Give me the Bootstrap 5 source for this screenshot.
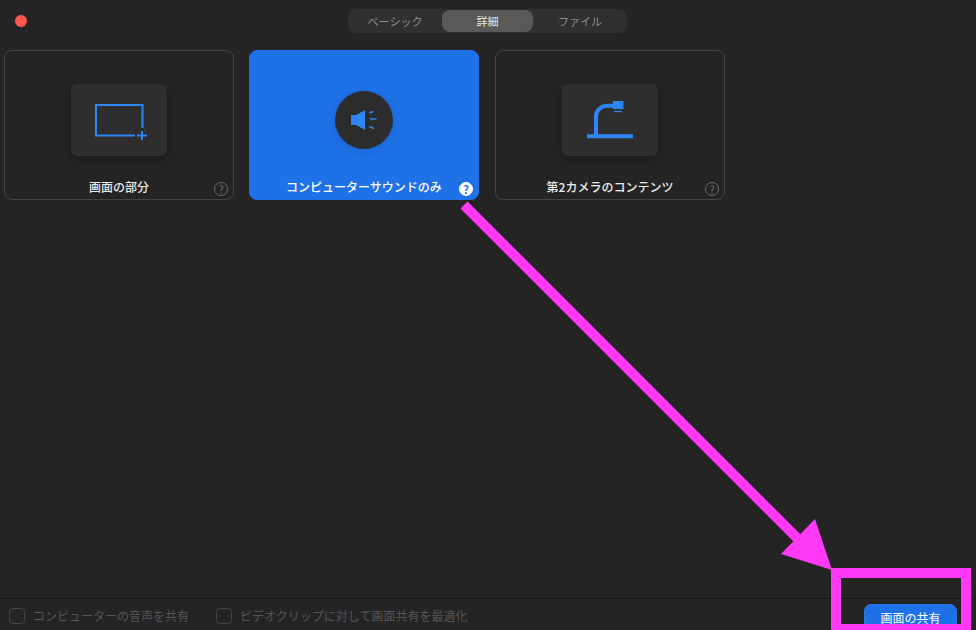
<!DOCTYPE html>
<html lang="ja">
<head>
    <meta charset="UTF-8">
    <meta name="viewport" content="width=device-width, initial-scale=1.0">
    <title>画面の共有</title>
    <link href="https://cdn.jsdelivr.net/npm/bootstrap@5.3.0/dist/css/bootstrap.min.css" rel="stylesheet">
    <style>
        html, body {
            height: 100%;
        }
        body {
            background: #242424;
            font-family: "Noto Sans CJK JP", "Liberation Sans", sans-serif;
            overflow: hidden;
        }
        .share-window {
            height: 630px;
        }
        .title-row {
            height: 50px;
            padding-top: 9px;
        }
        .close-dot {
            width: 12px;
            height: 12px;
            border-radius: 50%;
            background: #ff5750;
            left: 15px;
            top: 15px;
        }
        .mode-tabs {
            width: 279px;
            height: 24px;
            margin-right: 1px;
            background: #303030;
            border-radius: 8px;
            padding: 1px 0;
        }
        .mode-tabs .nav-link {
            height: 22px;
            padding: 0;
            font-size: 11px;
            line-height: 22px;
            color: #8e8e8e;
            border-radius: 8px;
            text-align: center;
        }
        .mode-tabs .tab-basic {
            width: 94px;
        }
        .mode-tabs .nav-link.active {
            width: 91px;
            background: #595959;
            color: #e8e8e8;
        }
        .mode-tabs .tab-file {
            width: 94px;
        }
        .share-cards {
            padding-left: 4px;
            gap: 15px;
        }
        .share-card {
            width: 230px;
            height: 150px;
            padding-top: 33px;
            background: transparent;
            border: 1px solid #444;
            border-radius: 8px;
            color: #ececec;
        }
        .share-card.selected {
            background: #1f71e8;
            border-color: #1f71e8;
            color: #fff;
        }
        .card-last {
            margin-left: 1px;
        }
        .icon-tile {
            width: 96px;
            height: 72px;
            background: #2e2e2e;
            border-radius: 6px;
            box-shadow: 0 3px 10px rgba(0, 0, 0, .28);
        }
        .icon-circle {
            width: 58px;
            height: 58px;
            margin: 7px 0;
            background: #2c2c2c;
            border-radius: 50%;
            box-shadow: 0 2px 10px rgba(0, 0, 0, .12);
        }
        .card-label {
            margin-top: 21px;
            font-size: 12px;
            line-height: 20px;
            font-weight: 500;
        }
        .help-mark {
            right: 5px;
            bottom: 3px;
            width: 14px;
            height: 14px;
            border: 1px solid #6a6a6a;
            border-radius: 50%;
            color: #6a6a6a;
            font-size: 11px;
            line-height: 12px;
            text-align: center;
        }
        .selected .help-mark {
            background: #fff;
            border-color: #fff;
            color: #1f71e8;
            font-weight: 700;
        }
        .bottom-bar {
            height: 32px;
            padding: 5px 19px 0 9px;
            border-top: 1px solid #171717;
            overflow: hidden;
        }
        .fake-check {
            width: 16px;
            height: 16px;
            margin: 4px 8px 0 0;
            background: transparent;
            border: 1px solid #444;
            border-radius: 4px;
        }
        .check-text {
            margin-top: 2px;
            font-size: 12px;
            line-height: 20px;
            color: #565656;
        }
        .check-item + .check-item {
            margin-left: 27px;
        }
        .share-btn {
            width: 93px;
            height: 26px;
            padding: 1px 0 0;
            background: #1f71e8;
            border: 1px solid #2a77e0;
            border-radius: 7px;
            color: #fff;
            font-size: 12px;
            line-height: 20px;
        }
        .arrow-overlay {
            top: 0;
            left: 0;
            pointer-events: none;
        }
    </style>
</head>
<body>
    <div class="share-window d-flex flex-column position-relative">
        <div class="title-row d-flex justify-content-center position-relative">
            <span class="close-dot position-absolute"></span>
            <ul class="nav mode-tabs">
                <li class="nav-item"><a class="nav-link tab-basic" href="#">ベーシック</a></li>
                <li class="nav-item"><a class="nav-link active" href="#">詳細</a></li>
                <li class="nav-item"><a class="nav-link tab-file" href="#">ファイル</a></li>
            </ul>
        </div>

        <div class="share-cards d-flex flex-grow-1 align-items-start">
            <div class="share-card d-flex flex-column align-items-center position-relative">
                <div class="icon-tile">
                    <svg width="96" height="72" viewBox="0 0 96 72" fill="none" stroke="#2d86f8">
                        <path d="M64 51.5H25V21H71.5V44" stroke-width="2"/>
                        <path d="M66 51.5H76M71 47V56" stroke-width="2"/>
                    </svg>
                </div>
                <div class="card-label">画面の部分</div>
                <span class="help-mark position-absolute">?</span>
            </div>

            <div class="share-card selected d-flex flex-column align-items-center position-relative">
                <div class="icon-circle">
                    <svg width="58" height="58" viewBox="0 0 58 58">
                        <path d="M16 24H21L30 19V39L21 34H16Z" fill="#2d86f8"/>
                        <path d="M34.5 22L38.5 20.5M35 28H41.5M34.5 35.5L39 37.5" stroke="#2d86f8" stroke-width="1.6" fill="none"/>
                    </svg>
                </div>
                <div class="card-label">コンピューターサウンドのみ</div>
                <span class="help-mark position-absolute">?</span>
            </div>

            <div class="share-card card-last d-flex flex-column align-items-center position-relative">
                <div class="icon-tile">
                    <svg width="96" height="72" viewBox="0 0 96 72" fill="none" stroke="#2d86f8">
                        <path d="M25 52.3H71" stroke-width="4"/>
                        <path d="M34 52V33C34 26 39 21.8 46 21.8H52" stroke-width="4"/>
                        <rect x="51" y="17" width="10.5" height="8" fill="#2d86f8" stroke="none"/>
                        <path d="M52 27.5H60" stroke-width="1.4"/>
                    </svg>
                </div>
                <div class="card-label">第2カメラのコンテンツ</div>
                <span class="help-mark position-absolute">?</span>
            </div>
        </div>

        <div class="bottom-bar d-flex align-items-start">
            <div class="check-item d-flex">
                <span class="fake-check"></span>
                <span class="check-text">コンピューターの音声を共有</span>
            </div>
            <div class="check-item d-flex">
                <span class="fake-check"></span>
                <span class="check-text">ビデオクリップに対して画面共有を最適化</span>
            </div>
            <button class="btn share-btn ms-auto" type="button">画面の共有</button>
        </div>

        <!-- annotation drawn over the dialog -->
        <svg class="arrow-overlay position-absolute" width="976" height="630" viewBox="0 0 976 630" fill="#ff39f5">
            <path d="M464 205L802 543" stroke="#ff39f5" stroke-width="10" fill="none"/>
            <path d="M832 570L815 519L781 554Z"/>
            <path d="M831 568H971V630H831ZM841 578V624H961V578Z" fill-rule="evenodd"/>
        </svg>
    </div>
    <script src="https://cdn.jsdelivr.net/npm/bootstrap@5.3.0/dist/js/bootstrap.bundle.min.js"></script>
</body>
</html>
